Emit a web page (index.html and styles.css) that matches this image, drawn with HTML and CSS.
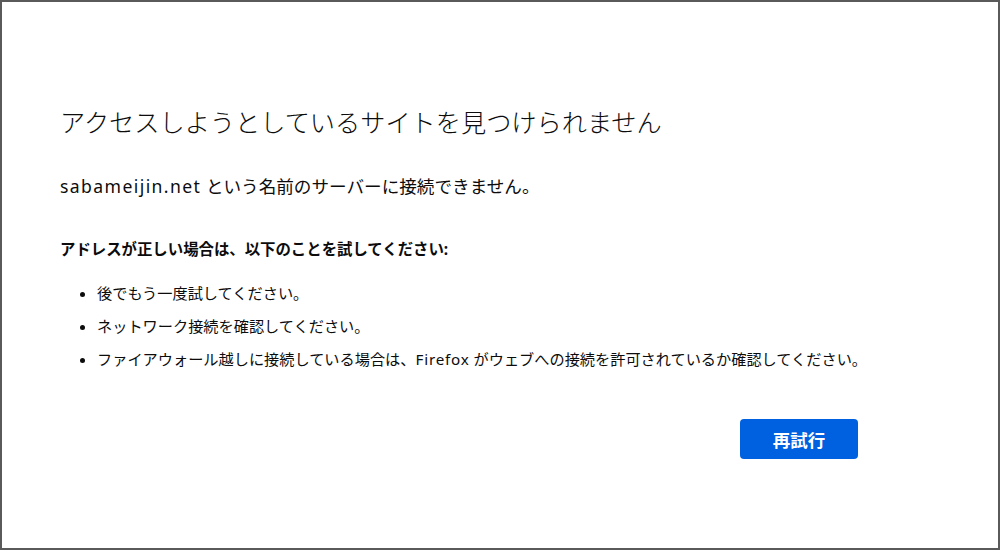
FILE: index.html
```html
<!DOCTYPE html>
<html lang="ja">
<head>
<meta charset="utf-8">
<link rel="stylesheet" href="styles.css">
</head>
<body>
<div class="frame">
  <main class="container">
    <h1 class="title">アクセスしようとしているサイトを見つけられません</h1>
    <p class="desc"><span class="latin">sabameijin.net</span> という名前のサーバーに接続できません。</p>
    <p class="lead">アドレスが正しい場合は、以下のことを試してください:</p>
    <ul class="tips">
      <li>後でもう一度試してください。</li>
      <li>ネットワーク接続を確認してください。</li>
      <li>ファイアウォール越しに接続している場合は、<span class="latin-sm">Firefox</span> がウェブへの接続を許可されているか確認してください。</li>
    </ul>
    <div class="actions">
      <button class="retry">再試行</button>
    </div>
  </main>
</div>
</body>
</html>
```
FILE: styles.css
```css
html, body {
  margin: 0;
  padding: 0;
  background: #ffffff;
}
body {
  font-family: "Noto Sans", "Noto Sans CJK JP", sans-serif;
  color: #0c0c0d;
}
.frame {
  box-sizing: border-box;
  width: 1000px;
  height: 550px;
  border: 2px solid #5a5a5a;
  background: #fff;
}
.container {
  box-sizing: border-box;
  width: 900px;
  padding: 104px 0 0 58px;
}
.title {
  margin: 0;
  font-size: 25.2px;
  font-weight: 300;
  line-height: 32px;
}
.desc {
  margin: 35px 0 0;
  font-size: 17.6px;
  line-height: 26px;
}
.latin {
  letter-spacing: 1.4px;
}
.latin-sm {
  letter-spacing: 0.8px;
}
.lead {
  margin: 39px 0 0;
  font-size: 15.4px;
  font-weight: 700;
  line-height: 24px;
}
.tips {
  margin: 20px 0 0;
  padding-left: 37px;
  font-size: 15.2px;
  line-height: 23px;
}
.tips li {
  margin-bottom: 10px;
}
.actions {
  display: flex;
  justify-content: flex-end;
  width: 798px;
  margin-top: 48px;
}
.retry {
  width: 118px;
  height: 40px;
  border: none;
  border-radius: 4px;
  background: #0061e0;
  color: #fff;
  font-family: "Noto Sans", "Noto Sans CJK JP", sans-serif;
  font-size: 17.5px;
  font-weight: 700;
}
```
